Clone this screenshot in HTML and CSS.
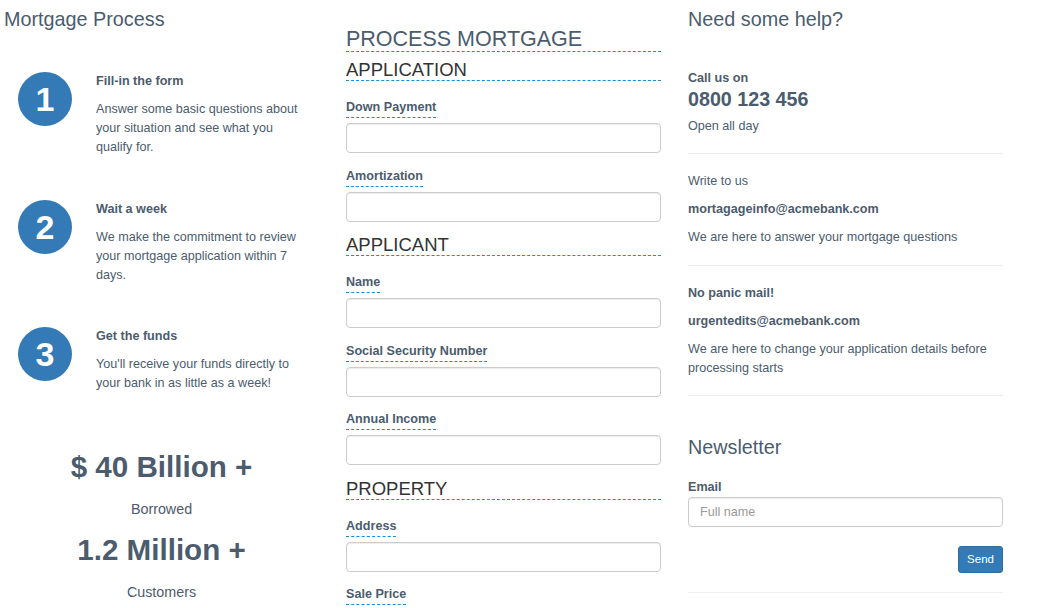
FILE: index.html
```html
<!DOCTYPE html>
<html lang="en">
<head>
<meta charset="utf-8">
<title>Mortgage Process</title>
<link rel="stylesheet" href="styles.css">
</head>
<body>
<div class="page">
  <section class="col col-left">
    <h3 class="col-title">Mortgage Process</h3>
    <div class="steps">
      <div class="step">
        <div class="step-num">1</div>
        <div class="step-body">
          <p class="step-title">Fill-in the form</p>
          <p class="step-text">Answer some basic questions about your situation and see what you qualify for.</p>
        </div>
      </div>
      <div class="step">
        <div class="step-num">2</div>
        <div class="step-body">
          <p class="step-title">Wait a week</p>
          <p class="step-text">We make the commitment to review your mortgage application within 7 days.</p>
        </div>
      </div>
      <div class="step">
        <div class="step-num">3</div>
        <div class="step-body">
          <p class="step-title">Get the funds</p>
          <p class="step-text">You'll receive your funds directly to your bank in as little as a week!</p>
        </div>
      </div>
    </div>
    <div class="stats">
      <div class="stat-value">$ 40 Billion +</div>
      <div class="stat-label">Borrowed</div>
      <div class="stat-value">1.2 Million +</div>
      <div class="stat-label">Customers</div>
    </div>
  </section>

  <section class="col col-mid">
    <h2 class="form-title">PROCESS MORTGAGE</h2>
    <h3 class="form-section">APPLICATION</h3>
    <div class="form-group">
      <label class="field-label">Down Payment</label>
      <input class="field" type="text">
    </div>
    <div class="form-group">
      <label class="field-label">Amortization</label>
      <input class="field" type="text">
    </div>
    <h3 class="form-section">APPLICANT</h3>
    <div class="form-group">
      <label class="field-label">Name</label>
      <input class="field" type="text">
    </div>
    <div class="form-group">
      <label class="field-label">Social Security Number</label>
      <input class="field" type="text">
    </div>
    <div class="form-group">
      <label class="field-label">Annual Income</label>
      <input class="field" type="text">
    </div>
    <h3 class="form-section">PROPERTY</h3>
    <div class="form-group">
      <label class="field-label">Address</label>
      <input class="field" type="text">
    </div>
    <div class="form-group">
      <label class="field-label">Sale Price</label>
      <input class="field" type="text">
    </div>
  </section>

  <section class="col col-right">
    <h3 class="col-title">Need some help?</h3>
    <div class="help-block call">
      <p class="strong tight">Call us on</p>
      <p class="phone">0800 123 456</p>
      <p>Open all day</p>
    </div>
    <hr class="sep">
    <div class="help-block">
      <p>Write to us</p>
      <p class="strong">mortagageinfo@acmebank.com</p>
      <p>We are here to answer your mortgage questions</p>
    </div>
    <hr class="sep">
    <div class="help-block">
      <p class="strong">No panic mail!</p>
      <p class="strong">urgentedits@acmebank.com</p>
      <p>We are here to change your application details before processing starts</p>
    </div>
    <hr class="sep">
    <h3 class="col-title news-title">Newsletter</h3>
    <label class="email-label">Email</label>
    <input class="field" type="text" placeholder="Full name">
    <div class="send-row"><button class="btn-send" type="button">Send</button></div>
    <hr class="sep last">
  </section>
</div>
</body>
</html>
```

FILE: styles.css
```css
* { box-sizing: border-box; }

html, body {
  margin: 0;
  padding: 0;
  background: #fff;
}

body {
  font-family: "Liberation Sans", Arial, sans-serif;
  font-size: 12.6px;
  line-height: 19px;
  color: #4b5c6e;
  overflow: hidden;
}

p { margin: 0 0 9px; }

.page {
  display: grid;
  grid-template-columns: 342px 342px 342px;
  padding-left: 4px;
}

.col {
  padding-right: 27px;
  min-width: 0;
}

.col-title {
  font-size: 19.8px;
  font-weight: 400;
  line-height: 22px;
  margin: 8px 0 0;
  color: #4b5c6e;
}

/* left column */
.steps {
  display: flex;
  flex-direction: column;
  gap: 42.5px;
  margin-top: 42px;
}

.step {
  display: flex;
  align-items: flex-start;
}

.step-num {
  flex: 0 0 54px;
  width: 54px;
  height: 54px;
  margin: 0 24px 0 14px;
  border-radius: 50%;
  background: #337ab7;
  color: #fff;
  font-weight: 700;
  font-size: 34px;
  line-height: 54px;
  text-align: center;
}

.step-body {
  flex: 0 0 210px;
  width: 210px;
}

.step-title {
  font-weight: 700;
  margin: 0 0 9px;
}

.step-text { margin: 0; }

.stats {
  margin-top: 57.5px;
  text-align: center;
}

.stat-value {
  font-size: 29.6px;
  font-weight: 700;
  line-height: 32px;
  margin-bottom: 16px;
}

.stat-label {
  font-size: 14.3px;
  line-height: 20px;
  margin-bottom: 15px;
}

/* middle column */
.form-title {
  font-size: 21.5px;
  font-weight: 400;
  line-height: 24px;
  margin: 27px 0 8px;
  color: #4b5c6e;
  border-bottom: 1px dashed #1a8cd8;
}

.form-section {
  font-size: 18.5px;
  font-weight: 400;
  line-height: 20px;
  margin: 0 0 17px;
  color: #333;
  border-bottom: 1px dashed #1a8cd8;
}

.form-group { margin-bottom: 13.5px; }

.field-label {
  display: inline-block;
  font-weight: 700;
  line-height: 18px;
  padding-bottom: 1px;
  border-bottom: 1px dashed #1a8cd8;
  margin-bottom: 5px;
}

.field {
  display: block;
  width: 100%;
  height: 30px;
  padding: 5px 11px;
  font-family: inherit;
  font-size: 12.6px;
  color: #555;
  background: #fff;
  border: 1px solid #ccc;
  border-radius: 4px;
  box-shadow: inset 0 1px 1px rgba(0,0,0,0.075);
  outline: none;
}

.field::placeholder { color: #999; }

/* right column */
.help-block { display: flow-root; }
.help-block p:last-child { margin-bottom: 0; }

.help-block.call { margin-top: 38.5px; }

.strong { font-weight: 700; }
.tight { margin-bottom: 0; }

.phone {
  font-size: 19.7px;
  font-weight: 700;
  line-height: 22px;
  margin: 0 0 7px;
}

.sep {
  border: 0;
  border-top: 1px solid #eee;
  margin: 17.5px 0 18px;
  height: 0;
}

.news-title { margin-top: 39.5px; }

.email-label {
  display: block;
  font-weight: 700;
  line-height: 18px;
  margin: 20px 0 1px;
}

.send-row {
  display: flex;
  justify-content: flex-end;
  margin-top: 19px;
}

.btn-send {
  font-family: inherit;
  font-size: 11.5px;
  line-height: 15px;
  padding: 5px 8px;
  color: #fff;
  background: #337ab7;
  border: 1px solid #2e6da4;
  border-radius: 3px;
  height: 27px;
  width: 45px;
}

.sep.last { margin-top: 19px; }
```
